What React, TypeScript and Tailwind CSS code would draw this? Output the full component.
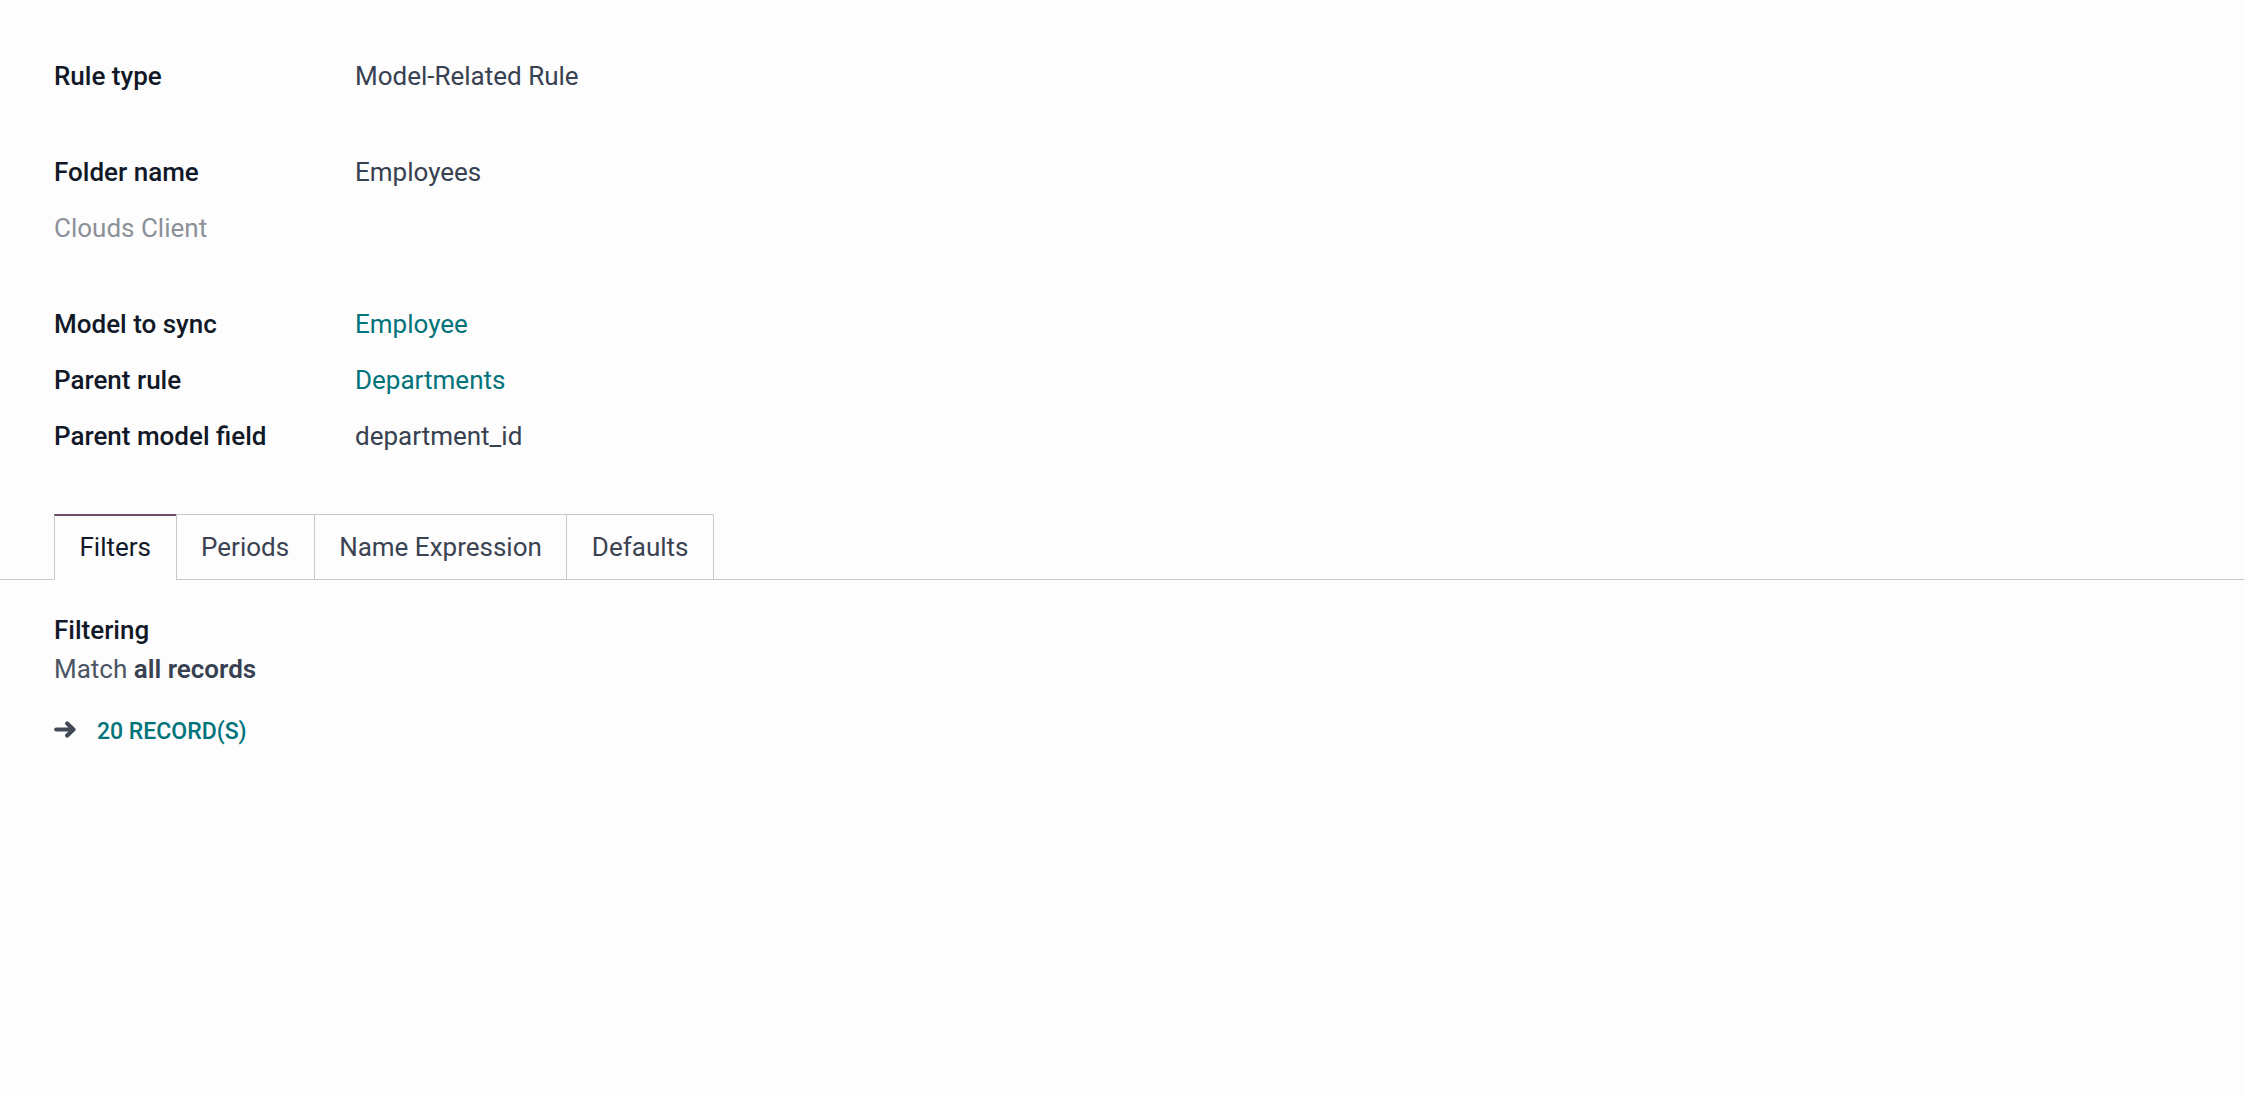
type Field = { label: string; value?: string; link?: boolean }

const FieldRow = ({ label, value, link }: Field) => (
  <div className="grid grid-cols-[301px_1fr] h-[39px] items-center">
    <div className="font-medium text-[#111827]">{label}</div>
    <div className={link ? 'text-[#01737a]' : 'text-[#374151]'}>{value}</div>
  </div>
)

// solid right arrow, same shape as the fa-arrow-right glyph
const Arrow = () => (
  <svg width="23" height="17" viewBox="0 0 23 17" className="text-[#434a57]">
    <path
      d="M2.2 8.5H19.5M13.2 2.4L19.5 8.5L13.2 14.6"
      fill="none"
      stroke="currentColor"
      strokeWidth="4.2"
      strokeLinecap="round"
      strokeLinejoin="round"
    />
  </svg>
)

const tabs = ['Filters', 'Periods', 'Name Expression', 'Defaults']

export default function App() {
  return (
    <div
      className="min-h-screen bg-[#fdfdfd] text-[26px] leading-[39px]"
      style={{ fontFamily: 'Roboto, "Liberation Sans", sans-serif' }}
    >
      <div className="pl-[54px] pt-[57px]">
        <FieldRow label="Rule type" value="Model-Related Rule" />

        <div className="mt-[57px]">
          <FieldRow label="Folder name" value="Employees" />
          <div className="mt-[17px] text-[#8c9199]">Clouds Client</div>
        </div>

        <div className="mt-[57px] flex flex-col gap-[17px]">
          <FieldRow label="Model to sync" value="Employee" link />
          <FieldRow label="Parent rule" value="Departments" link />
          <FieldRow label="Parent model field" value="department_id" />
        </div>
      </div>

      {/* notebook tabs */}
      <div className="mt-[58px] border-b border-[#c6cace] pl-[54px] flex">
        {tabs.map((t, i) => {
          const active = i === 0
          return (
            <div
              key={t}
              className={
                'h-[66px] -mb-px px-[24.5px] flex items-center border-l border-t border-[#c6cace] ' +
                (i === tabs.length - 1 ? 'border-r ' : '') +
                (active
                  ? 'bg-[#fdfdfd] border-b border-b-[#fdfdfd] border-t-2 border-t-[#714b67] text-[#111827]'
                  : 'text-[#3b4352]')
              }
            >
              {t}
            </div>
          )
        })}
      </div>

      <div className="pl-[54px] pt-[31px]">
        <div className="font-medium text-[#111827]">Filtering</div>
        <div className="mt-0 text-[#4b5563]">
          Match <span className="font-semibold text-[#374151]">all records</span>
        </div>
        <div className="mt-[25px] flex items-center h-[35px] text-[23px]">
          <div className="-mt-[4px]">
            <Arrow />
          </div>
          <span className="ml-[20px] text-[#01737a] font-medium">20 RECORD(S)</span>
        </div>
      </div>
    </div>
  )
}
